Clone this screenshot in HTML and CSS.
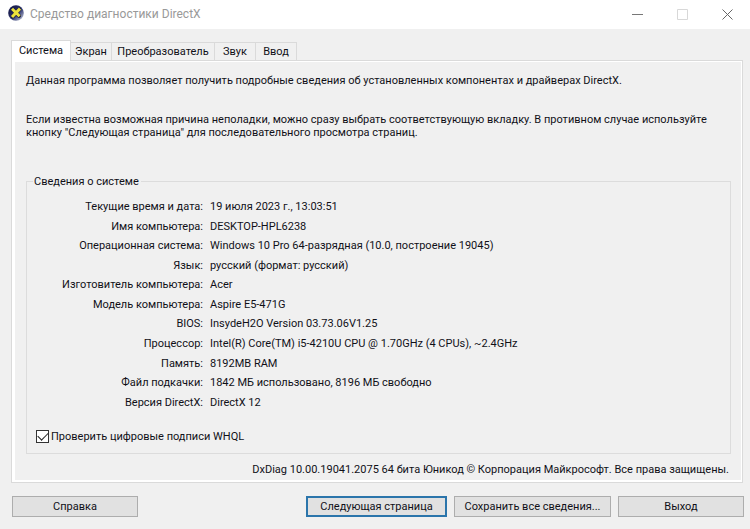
FILE: index.html
```html
<!DOCTYPE html>
<html lang="ru">
<head>
    <meta charset="UTF-8">
    <meta name="viewport" content="width=device-width, initial-scale=1.0">
    <title>Средство диагностики DirectX</title>
    <link rel="stylesheet" href="styles.css">
</head>
<body>
    <header class="titlebar">
        <svg class="app-icon" viewBox="0 0 16 16" aria-hidden="true">
            <defs>
                <linearGradient id="disc" x1="0" y1="0" x2="1" y2="1">
                    <stop offset="0.3" stop-color="#1c2052"/>
                    <stop offset="0.6" stop-color="#3f477c"/>
                    <stop offset="0.9" stop-color="#b4bace"/>
                </linearGradient>
            </defs>
            <circle cx="8" cy="8" r="7.8" fill="url(#disc)"/>
            <path d="M5 4.8L11 10.8M11.2 4.4L4.8 11.4" stroke="#14183c" stroke-width="4" stroke-linecap="round"/>
            <path d="M4 3.8L11.6 11.2M12 3.6L4 12" stroke="#ece23c" stroke-width="3"/>
        </svg>
        <h1 class="title">Средство диагностики DirectX</h1>
        <div class="window-buttons">
            <button type="button" aria-label="Свернуть">
                <svg viewBox="0 0 11 11"><path d="M0 5.5H11" stroke="#777"/></svg>
            </button>
            <button type="button" aria-label="Развернуть" disabled>
                <svg viewBox="0 0 11 11"><path d="M.5 .5H10.5V10.5H.5Z" fill="none" stroke="#d8d8d8"/></svg>
            </button>
            <button type="button" aria-label="Закрыть">
                <svg viewBox="0 0 11 11"><path d="M.5 .5L10.5 10.5M10.5 .5L.5 10.5" stroke="#666"/></svg>
            </button>
        </div>
    </header>

    <main class="content">
        <div class="tabs" role="tablist">
            <button type="button" class="tab active" role="tab" aria-selected="true">Система</button>
            <button type="button" class="tab" role="tab">Экран</button>
            <button type="button" class="tab tab-render" role="tab">Преобразователь</button>
            <button type="button" class="tab" role="tab">Звук</button>
            <button type="button" class="tab" role="tab">Ввод</button>
        </div>

        <section class="panel" role="tabpanel">
            <p class="intro">Данная программа позволяет получить подробные сведения об установленных компонентах и драйверах DirectX.</p>
            <p class="hint">Если известна возможная причина неполадки, можно сразу выбрать соответствующую вкладку. В противном случае используйте кнопку "Следующая страница" для последовательного просмотра страниц.</p>

            <fieldset class="group">
                <legend>Сведения о системе</legend>
                <table class="info">
                    <tr><th scope="row">Текущие время и дата:</th><td>19 июля 2023 г., 13:03:51</td></tr>
                    <tr><th scope="row">Имя компьютера:</th><td>DESKTOP-HPL6238</td></tr>
                    <tr><th scope="row">Операционная система:</th><td>Windows 10 Pro 64-разрядная (10.0, построение 19045)</td></tr>
                    <tr><th scope="row">Язык:</th><td>русский (формат: русский)</td></tr>
                    <tr><th scope="row">Изготовитель компьютера:</th><td>Acer</td></tr>
                    <tr><th scope="row">Модель компьютера:</th><td>Aspire E5-471G</td></tr>
                    <tr><th scope="row">BIOS:</th><td>InsydeH2O Version 03.73.06V1.25</td></tr>
                    <tr><th scope="row">Процессор:</th><td>Intel(R) Core(TM) i5-4210U CPU @ 1.70GHz (4 CPUs), ~2.4GHz</td></tr>
                    <tr><th scope="row">Память:</th><td>8192MB RAM</td></tr>
                    <tr><th scope="row">Файл подкачки:</th><td>1842 МБ использовано, 8196 МБ свободно</td></tr>
                    <tr><th scope="row">Версия DirectX:</th><td>DirectX 12</td></tr>
                </table>
                <div class="check">
                    <input type="checkbox" id="whql" checked>
                    <label for="whql">Проверить цифровые подписи WHQL</label>
                </div>
            </fieldset>

            <p class="version">DxDiag 10.00.19041.2075 64 бита Юникод © Корпорация Майкрософт. Все права защищены.</p>
        </section>
    </main>

    <footer class="actions">
        <button type="button" class="btn btn-help">Справка</button>
        <button type="button" class="btn btn-next">Следующая страница</button>
        <button type="button" class="btn btn-save">Сохранить все сведения...</button>
        <button type="button" class="btn">Выход</button>
    </footer>
</body>
</html>
```
FILE: styles.css
```css
* {
    box-sizing: border-box;
}
body {
    margin: 0;
    min-height: 100vh;
    background-color: #f0f0f0;
    color: #101018;
    font: 11px/13px Roboto, Tahoma, sans-serif;
}
button {
    font: inherit;
    color: inherit;
    white-space: nowrap;
}
p {
    margin: 0;
}

/* Title bar */
.titlebar {
    display: flex;
    align-items: center;
    height: 29px;
    padding-left: 8px;
    background-color: #fff;
}
.app-icon {
    width: 16px;
    height: 16px;
    margin-bottom: 3px;
}
.title {
    margin: 0 0 1px 6px;
    font: 12px/16px Roboto, "Open Sans", sans-serif;
    color: #999;
}
.window-buttons {
    display: flex;
    margin-left: auto;
}
.window-buttons button {
    display: flex;
    align-items: center;
    justify-content: center;
    width: 45px;
    height: 27px;
    padding: 0;
    border: 0;
    background: none;
}
.window-buttons svg {
    width: 11px;
    height: 11px;
}

/* Tabs */
.content {
    padding: 11px 7px 0 11px;
}
.tabs {
    display: flex;
    align-items: flex-end;
    height: 20px;
}
.tab {
    width: 41px;
    height: 18px;
    padding: 0;
    border: 1px solid #dadada;
    border-width: 1px 1px 0 0;
    background-color: #f0f0f0;
}
.tab-render {
    width: 103px;
}
.tab.active {
    position: relative;
    width: 60px;
    height: 21px;
    margin-bottom: -1px;
    padding-bottom: 2px;
    border-left-width: 1px;
    background-color: #fff;
}

/* System page */
.panel {
    padding: 13px 8px 6px 11px;
    border: 1px solid #dadada;
    box-shadow: inset 3px 0 #fff, inset 0 1px #fff, inset -1px -2px #fff;
}
.intro {
    padding-left: 3px;
}
.hint {
    margin-top: 26px;
    padding-left: 3px;
}
.group {
    min-width: 0;
    margin: 36px 3px 0;
    padding: 9px 7px 10px;
    border: 1px solid #dcdcdc;
}
.group legend {
    padding: 0 2px 0 1px;
    margin-left: -1px;
}
.info {
    height: 215px;
    border-collapse: collapse;
}
.info th,
.info td {
    padding: 0;
    font-weight: normal;
}
.info th {
    width: 169px;
    text-align: right;
}
.info td {
    padding-left: 7px;
    text-align: left;
}
.check {
    display: flex;
    align-items: center;
    gap: 2px;
    margin: 18px 0 0 2px;
}
.check input {
    display: flex;
    align-items: center;
    justify-content: center;
    appearance: none;
    width: 13px;
    height: 13px;
    margin: 0;
    border: 1px solid #333;
    background-color: #fff;
}
.check input:checked::before {
    content: "";
    width: 9px;
    height: 5px;
    margin-bottom: 3px;
    border: solid #222;
    border-width: 0 0 1px 1px;
    transform: rotate(-45deg);
}
.version {
    margin-top: 9px;
    padding-right: 5px;
    text-align: right;
}

/* Bottom buttons */
.actions {
    display: flex;
    gap: 7px;
    padding: 13px 6px 12px 12px;
}
.btn {
    width: 126px;
    height: 21px;
    padding: 0;
    border: 1px solid #adadad;
    background-color: #e1e1e1;
}
.btn-help {
    margin-right: auto;
}
.btn-next {
    width: 141px;
    border: 2px solid #2b75ab;
}
.btn-save {
    width: 157px;
}
```
